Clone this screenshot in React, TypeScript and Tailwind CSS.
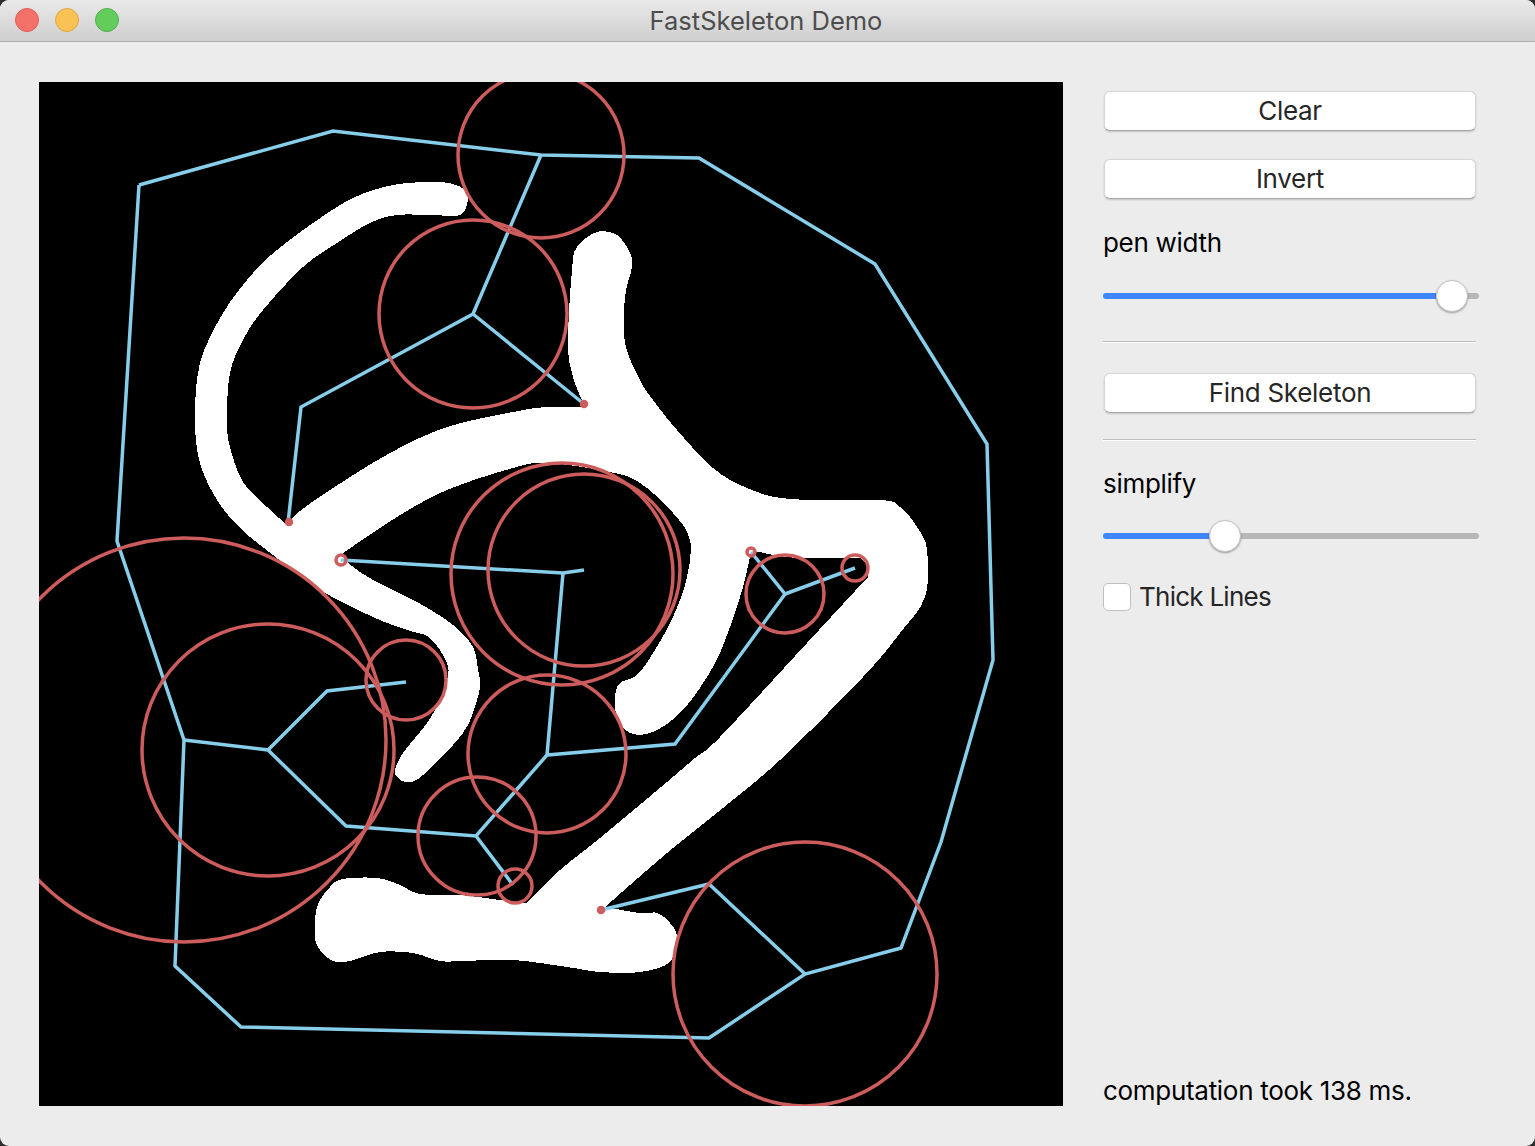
const blob = `433,182 393,185 353,198 313,223 277,250 253,273 223,313 200,363 195,420 200,463 217,500 240,528 273,555 320,590 373,617 407,630 430,638 447,663 447,680 440,700 427,723 403,753 395,770 397,777 407,782 423,775 463,733 477,700 480,683 478,670 473,647 453,625 417,602 373,580 347,562 343,553 397,517 447,490 513,468 547,463 610,472 640,483 673,513 690,540 687,577 673,617 653,653 637,675 620,683 615,697 617,717 630,733 653,732 683,710 713,667 730,627 743,587 750,557 757,552 773,555 797,558 830,558 860,558 868,566 868,577 807,643 720,737 695,758 667,782 600,838 560,870 527,903 500,900 460,895 420,894 400,885 377,878 343,879 330,887 317,907 315,937 320,950 333,961 350,961 380,952 413,953 440,961 463,961 513,960 567,967 600,972 640,972 670,962 677,937 670,923 657,913 640,913 605,907 667,853 718,812 780,760 863,677 900,633 925,597 927,550 917,527 900,507 880,500 790,499 747,488 713,468 677,430 653,400 640,380 625,343 625,297 632,267 630,253 617,235 597,232 577,247 572,270 568,343 573,377 585,407 547,407 513,412 447,427 390,453 330,490 295,515 288,526 267,507 243,482 230,447 227,420 230,373 243,340 263,310 303,267 337,243 370,223 397,215 433,215 460,215 468,200 465,190 453,184`;

const cornerKeys = ["343,553", "750,557", "860,558", "868,566", "868,577", "527,903", "605,907", "585,407", "288,526"];

function buildBlobPath(): string {
  const raw = blob.split(" ");
  const start = raw.indexOf(cornerKeys[0]);
  const rotated = [...raw.slice(start), ...raw.slice(0, start), raw[start]];
  const pts = rotated.map((s) => s.split(",").map(Number));
  let d = `M${pts[0][0]} ${pts[0][1]}`;
  const isCorner = (i: number) => cornerKeys.includes(rotated[i]);
  for (let i = 0; i < pts.length - 1; i++) {
    const p1 = pts[i];
    const p2 = pts[i + 1];
    const p0 = isCorner(i) || i === 0 ? p1 : pts[i - 1];
    const p3 = isCorner(i + 1) || i + 2 >= pts.length ? p2 : pts[i + 2];
    const c1x = p1[0] + (p2[0] - p0[0]) / 6;
    const c1y = p1[1] + (p2[1] - p0[1]) / 6;
    const c2x = p2[0] - (p3[0] - p1[0]) / 6;
    const c2y = p2[1] - (p3[1] - p1[1]) / 6;
    d += `C${c1x.toFixed(1)} ${c1y.toFixed(1)} ${c2x.toFixed(1)} ${c2y.toFixed(1)} ${p2[0]} ${p2[1]}`;
  }
  return d + "Z";
}

const blueLines = [
  "139,185 333,131 541,155 699,158 875,264 987,444 993,660 941,842 901,948 805,974 709,1038 241,1027 175,966 184,740 117,541 139,185",
  "541,155 473,314 301,407 288,523",
  "473,314 584,404",
  "341,560 563,573 584,570",
  "563,573 547,755 675,744 785,594 751,552",
  "785,594 855,568",
  "547,755 476,836 346,826 268,750 184,740",
  "476,836 513,885",
  "268,750 327,691 406,682",
  "601,910 709,884 805,974",
];

const circles: [number, number, number][] = [
  [541, 155, 83],
  [473, 314, 94],
  [184, 740, 202],
  [268, 750, 126],
  [406, 680, 40],
  [562, 574, 111],
  [584, 570, 96],
  [547, 754, 79],
  [477, 836, 59],
  [515, 886, 17],
  [785, 594, 39],
  [855, 568, 13],
  [751, 552, 4],
  [341, 560, 5],
  [584, 404, 2],
  [289, 522, 2],
  [601, 910, 2],
  [805, 974, 132],
];

function Button({ label }: { label: string }) {
  return (
    <button className="block h-[40px] w-[372px] rounded-[6px] border-t border-x border-[#d6d6d6] border-b-[#a8a8a8] border-b bg-white text-[26px] leading-[36px] tracking-[-0.3px] text-[#262626] shadow-[0_1px_2px_rgba(0,0,0,0.18)]">
      {label}
    </button>
  );
}

function Slider({ percent }: { percent: number }) {
  return (
    <div className="relative h-[32px] w-[376px] -ml-px">
      <div className="absolute left-0 right-0 top-[13px] h-[6px] rounded-full bg-[#b7b7b7]" />
      <div className="absolute left-0 top-[13px] h-[6px] rounded-l-full bg-[#3f86fb]" style={{ width: `${percent}px` }} />
      <div
        className="absolute top-0 h-[32px] w-[32px] rounded-full border border-[#c4c4c4] bg-white shadow-[0_1px_2px_rgba(0,0,0,0.35)]"
        style={{ left: `${percent}px` }}
      />
    </div>
  );
}

function Separator() {
  return <div className="-ml-px h-[2px] w-[373px] border-t border-[#bdbdbd] bg-white" />;
}

export default function App() {
  return (
    <div className="h-[1146px] w-[1535px] overflow-hidden bg-[#2e2e2e] font-['Inter','Liberation_Sans',sans-serif]">
      <div className="flex h-full flex-col overflow-hidden rounded-[9px] bg-[#ececec]">
        <header className="relative flex h-[42px] shrink-0 items-center justify-center border-b border-[#b0b0b0] bg-gradient-to-b from-[#e9e9e9] to-[#cfcfcf]">
          <div className="absolute left-[15px] top-[8px] flex gap-[16px]">
            <span className="block h-[24px] w-[24px] rounded-full border border-[#df5e57] bg-[#f4716a]" />
            <span className="block h-[24px] w-[24px] rounded-full border border-[#dfa445] bg-[#fac254]" />
            <span className="block h-[24px] w-[24px] rounded-full border border-[#53ae4b] bg-[#63cc5b]" />
          </div>
          <span className="mr-[3px] text-[25.5px] leading-none text-[#4d4d4d]">FastSkeleton Demo</span>
        </header>
        <main className="flex flex-1 overflow-hidden pl-[39px] pt-[40px]">
          <svg className="block h-[1024px] w-[1024px] shrink-0 bg-black" viewBox="39 82 1024 1024">
            <path d={buildBlobPath()} fill="#ffffff" shapeRendering="crispEdges" />
            {blueLines.map((p) => (
              <polyline key={p} points={p} fill="none" stroke="#87ceeb" strokeWidth={3.5} />
            ))}
            {circles.map(([cx, cy, r]) => (
              <circle key={`${cx}-${cy}`} cx={cx} cy={cy} r={r} fill="none" stroke="#cd5c5c" strokeWidth={r < 3 ? 4.5 : 3.5} />
            ))}
          </svg>
          <aside className="ml-[41px] flex h-[1027px] flex-col text-[26px] tracking-[-0.3px] text-black">
            <div className="mt-[9px]"><Button label="Clear" /></div>
            <div className="mt-[28px]"><Button label="Invert" /></div>
            <div className="-ml-px mt-[26px] h-[36px] leading-[36px]">pen width</div>
            <div className="mt-[19px]"><Slider percent={333} /></div>
            <div className="mt-[29px]"><Separator /></div>
            <div className="mt-[30px]"><Button label="Find Skeleton" /></div>
            <div className="mt-[26px]"><Separator /></div>
            <div className="-ml-px mt-[25px] h-[36px] leading-[36px]">simplify</div>
            <div className="mt-[18px]"><Slider percent={106} /></div>
            <label className="-ml-px mt-[29px] flex items-center gap-[8px] text-[#262626]">
              <span className="block h-[28px] w-[28px] rounded-[5px] border border-[#bfbfbf] bg-white" />
              <span className="pt-[1px] leading-[30px] tracking-[-0.75px]">Thick Lines</span>
            </label>
            <div className="-ml-px mt-auto h-[36px] leading-[36px]">computation took 138 ms.</div>
          </aside>
        </main>
      </div>
    </div>
  );
}
